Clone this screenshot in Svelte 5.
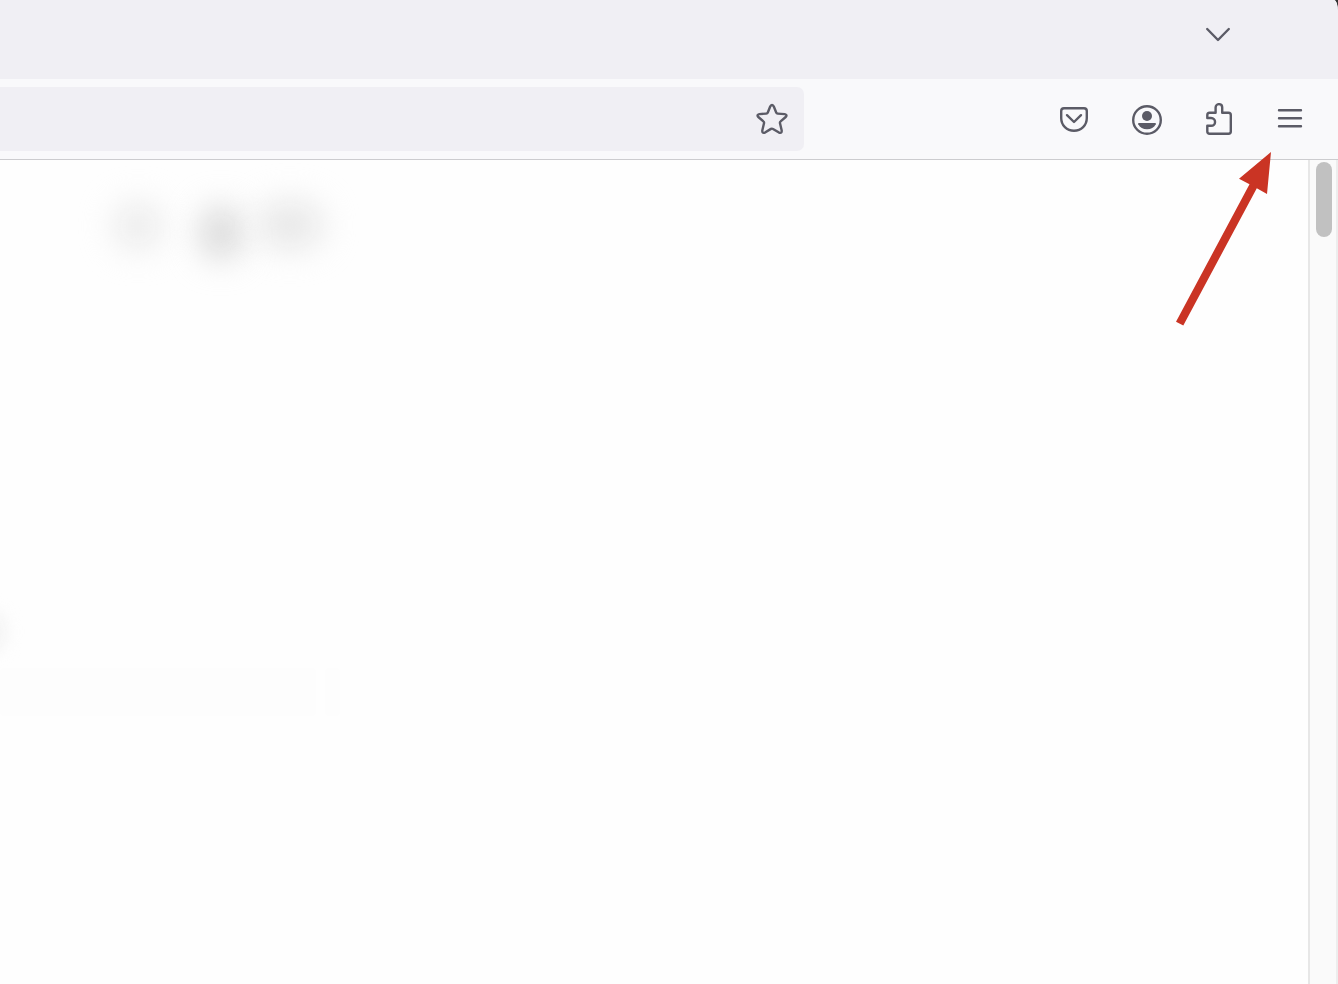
<script>
	let address = '';
</script>

<div class="window">
	<header class="tabs">
		<button type="button" aria-label="List all tabs">
			<svg width="32" height="32" viewBox="0 0 32 32">
				<path d="M5.2 11 16 22 26.8 11" />
			</svg>
		</button>
	</header>

	<nav class="toolbar">
		<form class="address" on:submit|preventDefault>
			<input type="text" aria-label="Address" autocomplete="off" bind:value={address} />
			<button type="button" aria-label="Bookmark this page">
				<svg width="32" height="32" viewBox="0 0 32 32">
					<path
						d="M14.3 3.3Q16 .8 17.7 3.3L20.2 9.5Q20.6 10.5 21.7 10.6L28.7 11.1Q31.6 11.6 29.7 14L24.6 18.4Q23.7 19.1 24 20.3L25.7 27.5Q26 30.8 23 29.6L17 25.9Q16 25.3 15 25.9L9 29.6Q6 30.8 6.3 27.5L8 20.3Q8.3 19.1 7.4 18.4L2.3 14Q.4 11.6 3.3 11.1L10.3 10.6Q11.4 10.5 11.8 9.5Z"
					/>
				</svg>
			</button>
		</form>

		<div class="actions">
			<button type="button" aria-label="Save to Pocket">
				<svg width="32" height="32" viewBox="0 0 32 32">
					<path
						d="M6 5.2H26Q28.8 5.2 28.8 8V15C28.8 22.3 23.2 27.8 16 27.8S3.2 22.3 3.2 15V8Q3.2 5.2 6 5.2Z"
					/>
					<path d="M9 12.2 16 19 23 12.2" />
				</svg>
			</button>
			<button type="button" aria-label="Account">
				<svg width="32" height="32" viewBox="0 0 32 32">
					<circle cx="17" cy="17" r="13.8" />
					<circle class="solid" cx="17" cy="13" r="5" />
					<path class="solid" d="M9 20H25Q26.4 20 25.8 21.2C24 24.6 21 26.3 17 26.3S10 24.6 8.2 21.2Q7.6 20 9 20Z" />
				</svg>
			</button>
			<button type="button" aria-label="Extensions">
				<svg width="32" height="32" viewBox="0 0 32 32">
					<path
						d="M5.3 15V12Q5.3 9.7 7.6 9.7H13.6V4.6C13.6 0 20.2 0 20.2 4.6V9.7H26.5Q28.8 9.7 28.8 12V28.6Q28.8 30.8 26.5 30.8H7.6Q5.3 30.8 5.3 28.6V22.8H9C14.4 22.8 14.4 15 9 15Z"
					/>
				</svg>
			</button>
			<button type="button" aria-label="Open application menu">
				<svg width="32" height="32" viewBox="0 0 32 32">
					<path d="M5 7.2H27M5 15.2H27M5 23.2H27" />
				</svg>
			</button>
		</div>
	</nav>

	<div class="content">
		<main>
			<div class="smudge left"></div>
			<div class="smudge middle"></div>
			<div class="smudge right"></div>
			<div class="smudge edge"></div>
			<div class="ghost bar"></div>
			<div class="ghost stub"></div>
		</main>
		<div class="scrollbar">
			<div class="thumb"></div>
		</div>
	</div>

	<!-- points at the menu button -->
	<svg class="arrow" width="95" height="174" viewBox="0 0 95 174">
		<path d="M95 0 63 26.7 73.5 32.3 0 169.7 7.3 173.5 80.8 36.2 91 42Z" />
	</svg>
</div>

<style>
	:global(body) {
		background: #333;
	}

	.window {
		position: relative;
		display: flex;
		flex-direction: column;
		min-height: 100vh;
		background: #fefefe;
		border-top-right-radius: 4px 12px;
		overflow: hidden;
		font-family: 'Liberation Sans', sans-serif;
	}

	button {
		display: flex;
		align-items: center;
		justify-content: center;
		width: 72px;
		height: 64px;
		padding: 0;
		border: 0;
		background: none;
	}

	button svg {
		fill: none;
		stroke: #5b5b66;
		stroke-width: 2.4;
		stroke-linecap: round;
		stroke-linejoin: round;
	}

	button .solid {
		fill: #5b5b66;
		stroke: none;
	}

	.tabs {
		display: flex;
		justify-content: flex-end;
		height: 77px;
		padding: 2px 84px 0 0;
		background: #f0eff4;
	}

	.toolbar {
		display: flex;
		justify-content: space-between;
		gap: 234px;
		padding: 8px 12px 8px 0;
		background: #f9f9fb;
		border-bottom: 1px solid #cccccf;
	}

	.address {
		display: flex;
		flex: 1;
		min-width: 0;
		background: #f0eff4;
		border-radius: 0 7px 7px 0;
	}

	.address input {
		flex: 1;
		min-width: 0;
		padding: 0 16px;
		border: 0;
		outline: 0;
		background: none;
		font: inherit;
		font-size: 28px;
		color: #15141a;
	}

	.address button {
		width: 64px;
	}

	.actions {
		display: flex;
	}

	.content {
		display: flex;
		flex: 1;
	}

	main {
		position: relative;
		flex: 1;
		overflow: hidden;
	}

	.smudge {
		position: absolute;
		border-radius: 50%;
		background: var(--tone);
		filter: blur(16px);
	}

	.left {
		--tone: #ebebeb;
		top: 42px;
		left: 114px;
		width: 48px;
		height: 48px;
	}

	.middle {
		--tone: #d8d8d8;
		top: 46px;
		left: 200px;
		width: 42px;
		height: 54px;
	}

	.right {
		--tone: #e8e8e8;
		top: 40px;
		left: 256px;
		width: 68px;
		height: 50px;
	}

	.edge {
		--tone: #f3f3f3;
		top: 450px;
		left: -26px;
		width: 32px;
		height: 44px;
		filter: blur(8px);
	}

	.ghost {
		position: absolute;
		top: 508px;
		height: 48px;
		background: #fdfdfd;
		border-radius: 4px;
	}

	.bar {
		left: 0;
		width: 316px;
	}

	.stub {
		left: 325px;
		width: 15px;
	}

	.scrollbar {
		box-sizing: border-box;
		width: 30px;
		padding: 2px 4px 2px 6px;
		background: #fafafa;
		border-left: 2px solid #e7e7e7;
		border-right: 2px solid #ededed;
	}

	.thumb {
		width: 16px;
		height: 75px;
		border-radius: 8px;
		background: #c1c1c1;
	}

	.arrow {
		position: absolute;
		top: 152px;
		right: 67px;
		fill: #ca3424;
		pointer-events: none;
	}
</style>
